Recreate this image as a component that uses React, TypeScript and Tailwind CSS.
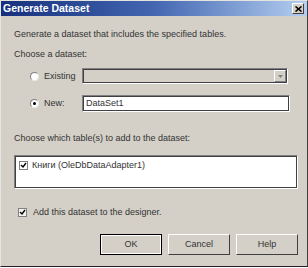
import React from 'react';

const font = { fontFamily: '"Liberation Sans", Arial, sans-serif' };

const Sunken = 'border border-t-[#808080] border-l-[#808080] border-b-white border-r-white';

const Radio = ({ checked }: { checked?: boolean }) => (
  <span className="relative inline-block w-[9px] h-[9px] rounded-full bg-white border border-t-[#808080] border-l-[#808080] border-b-[#e8e8e8] border-r-[#e8e8e8]">
    {checked && <span className="absolute left-[2px] top-[2px] w-[3px] h-[3px] rounded-full bg-black" />}
  </span>
);

const Check = ({ bg = 'bg-white' }: { bg?: string }) => (
  <span className={`inline-flex items-center justify-center w-[9px] h-[9px] ${bg} border border-[#808080]`}>
    <svg width="7" height="7" viewBox="0 0 7 7">
      <path d="M1 3 L3 5 L6 1" stroke="#000" strokeWidth="1.4" fill="none" />
    </svg>
  </span>
);

const Btn = ({ children, def }: { children: React.ReactNode; def?: boolean }) => (
  <div className={`w-[62px] h-[21px] flex items-center justify-center bg-[#d4d0c8] text-[9px] text-[#333] border ${def ? 'border-black outline outline-1 outline-white -outline-offset-2' : 'border-t-white border-l-white border-b-[#404040] border-r-[#404040]'}`}>
    {children}
  </div>
);

export default function App() {
  return (
    <div className="w-[308px] h-[268px] bg-white" style={font}>
      <div className="w-[308px] h-[267px] flex flex-col bg-[#d4d0c8] border border-l-[#e6e4df] border-t-[#e6e4df] border-r-[#404040] border-b-[#202020]">
        {/* Title bar */}
        <div className="h-[15px] flex items-center justify-between bg-gradient-to-r from-[#16307e] via-[#4466b0] to-[#b5cff0] pl-[2px] pr-[2px]">
          <span className="text-white font-bold text-[10.5px] leading-none">Generate Dataset</span>
          <span className="w-[12px] h-[11px] flex items-center justify-center bg-[#d4d0c8] border border-t-white border-l-white border-b-[#404040] border-r-[#404040] mr-[1px]">
            <svg width="7" height="6" viewBox="0 0 7 6">
              <path d="M0.5 0.5 L6.5 5.5 M6.5 0.5 L0.5 5.5" stroke="#000" strokeWidth="1.6" />
            </svg>
          </span>
        </div>

        <div className="flex flex-col px-[13px] text-[9px] text-[#333] leading-none">
          <div className="mt-[14px]">Generate a dataset that includes the specified tables.</div>
          <div className="mt-[11px]">Choose a dataset:</div>

          <div className="mt-[9px] flex items-center">
            <div className="w-[68px] pl-[16px] flex items-center gap-[5px]">
              <Radio />
              <span>Existing</span>
            </div>
            <div className={`w-[206px] h-[16px] flex justify-end items-center ${Sunken} outline outline-1 outline-[#404040] -outline-offset-2`}>
              <span className="w-[12px] h-[12px] mr-[1px] flex items-center justify-center bg-[#d4d0c8] border border-t-white border-l-white border-b-[#808080] border-r-[#808080]">
                <svg width="5" height="3" viewBox="0 0 5 3"><path d="M0 0 H5 L2.5 3 Z" fill="#808080" /></svg>
              </span>
            </div>
          </div>

          <div className="mt-[11px] flex items-center">
            <div className="w-[68px] pl-[16px] flex items-center gap-[5px]">
              <Radio checked />
              <span>New:</span>
            </div>
            <div className={`w-[208px] h-[17px] bg-white flex items-center px-[3px] ${Sunken} outline outline-1 outline-[#404040] -outline-offset-2`}>
              DataSet1
            </div>
          </div>

          <div className="mt-[22px]">Choose which table(s) to add to the dataset:</div>

          <div className={`mt-[12px] w-[284px] h-[34px] bg-white ${Sunken} outline outline-1 outline-[#404040] -outline-offset-2 pt-[5px] pl-[4px]`}>
            <div className="flex items-center gap-[4px]">
              <Check />
              <span>Книги (OleDbDataAdapter1)</span>
            </div>
          </div>

          <div className="mt-[19px] flex items-center gap-[6px] pl-[4px]">
            <Check bg="bg-[#f4f2ee]" />
            <span>Add this dataset to the designer.</span>
          </div>

          <div className="mt-[17px] flex justify-end gap-[6px] mr-[-4px]">
            <Btn def>OK</Btn>
            <Btn>Cancel</Btn>
            <Btn>Help</Btn>
          </div>
        </div>
      </div>
    </div>
  );
}
